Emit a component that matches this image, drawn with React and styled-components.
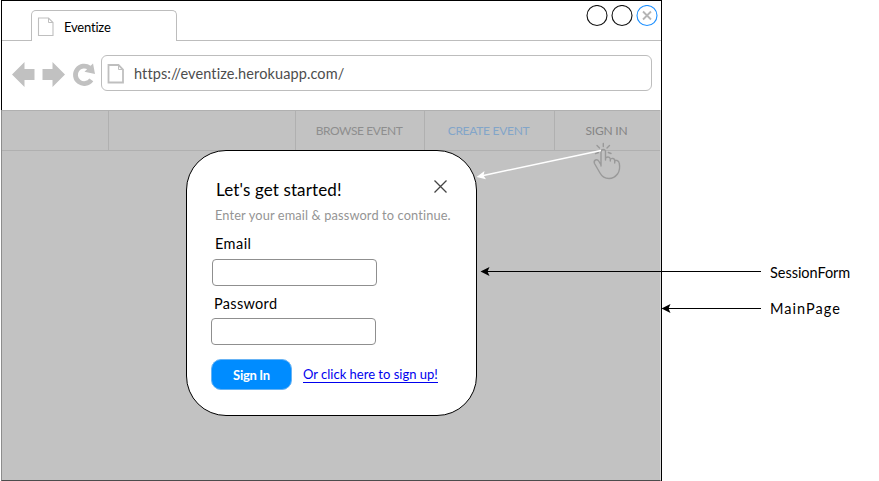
import React from "react";
import styled, { createGlobalStyle } from "styled-components";

const GlobalStyle = createGlobalStyle`
  * { box-sizing: border-box; }
  body { margin: 0; background: #fff; overflow: hidden; font-family: "Century Gothic", Lato, sans-serif; }
`;

const Stage = styled.div`
  position: relative;
  display: flex;
  width: 879px;
  height: 481px;
  padding-left: 1px;
  background: #fff;
`;

const Browser = styled.div`
  display: flex;
  flex-direction: column;
  flex: none;
  width: 661px;
  height: 481px;
  border-top: 1px solid #000;
  border-right: 1px solid #000;
`;

const Text = styled.span`
  font-size: ${(p) => p.$size}px;
  line-height: 20px;
  font-weight: ${(p) => p.$weight || 400};
  letter-spacing: ${(p) => p.$spacing || 0}px;
  color: ${(p) => p.$color || "#000"};
  font-variant-ligatures: none;
  white-space: nowrap;
`;

const Chrome = styled.div`
  flex: none;
  height: 109px;
  border-left: 1px solid #000;
`;

const TabStrip = styled.div`
  display: flex;
  height: 40px;
  align-items: flex-end;
`;

const StripEdge = styled.div`
  width: 29px;
  height: 1px;
  background: #bdbdbd;
`;

const StripRest = styled.div`
  display: flex;
  flex: 1;
  height: 40px;
  justify-content: flex-end;
  gap: 3px;
  padding: 4px 3.5px 0 0;
  border-bottom: 1px solid #bdbdbd;
`;

const Tab = styled.div`
  display: flex;
  width: 146px;
  height: 31px;
  padding: 6px 0 0 5px;
  gap: 10px;
  border: 1px solid #bdbdbd;
  border-bottom: 0;
  border-radius: 5px 5px 0 0;
`;

const Toolbar = styled.div`
  display: flex;
  padding: 14px 0 0 10px;
`;

const NavIcons = styled.svg`
  flex: none;
  width: 89px;
  height: 36px;
`;

const AddressBar = styled.div`
  display: flex;
  width: 551px;
  height: 36px;
  padding: 8px 0 0 5px;
  gap: 10px;
  border: 1px solid #bdbdbd;
  border-radius: 6px;
`;

const Page = styled.div`
  flex: 1;
  background: #c2c2c2;
  border-left: 1px solid #8c8c8c;
  border-right: 1px solid #dadada;
  border-bottom: 1px solid #4c4c4c;
`;

const NavBar = styled.nav`
  display: grid;
  grid-template-columns: 107px 187px 129px 130px 1fr;
  height: 41px;
  border-top: 1px solid #b0b0b0;
  border-bottom: 1px solid #b0b0b0;
`;

const NavCell = styled.div`
  display: flex;
  justify-content: center;
  padding: 10px 2px 0 0;
  border-right: ${(p) => (p.$last ? 0 : 1)}px solid #b0b0b0;
`;

const Modal = styled.section`
  position: absolute;
  left: 186px;
  top: 150px;
  width: 291px;
  height: 266px;
  padding: 0 0 0 24px;
  border: 1px solid #000;
  border-radius: 40px;
  background: #fff;
`;

const ModalHeader = styled.header`
  display: flex;
  justify-content: space-between;
  height: 54px;
  padding: 29px 29.5px 0 5px;
`;

const CloseIcon = styled.svg`
  flex: none;
  width: 13px;
  height: 13px;
  margin-top: -0.5px;
`;

const Line = styled.div`
  display: flex;
  height: ${(p) => p.$height}px;
  padding-top: ${(p) => p.$top || 0}px;
  padding-left: ${(p) => p.$indent}px;
`;

const Field = styled.input`
  display: block;
  width: 165px;
  height: 27px;
  margin: 0 0 0 ${(p) => p.$indent}px;
  border: 1px solid #8f8f8f;
  border-radius: 4px;
  background: #fff;
`;

const Actions = styled.div`
  display: flex;
  align-items: center;
  gap: 11px;
  margin-top: 14px;
`;

const SignInButton = styled.button`
  display: flex;
  align-items: center;
  justify-content: center;
  width: 81px;
  height: 31px;
  padding: 0;
  border: 1px solid #66b3f5;
  border-radius: 10px;
  background: #008cff;
  font-family: inherit;
`;

const SignUpLink = styled.a`
  display: flex;
  height: 16px;
  align-items: center;
  border-bottom: 1px solid #0000ee;
  text-decoration: none;
`;

const Notes = styled.aside`
  display: flex;
  flex-direction: column;
  gap: 16px;
  padding: 263px 0 0 108px;
`;

const Annotations = styled.svg`
  position: absolute;
  inset: 0;
  pointer-events: none;
`;

const PageIcon = ({ stroke = 1 }) => (
  <svg width="17" height="20" viewBox="0 0 17 20" fill="none" stroke="#bfbfbf" strokeWidth={stroke}>
    <path d="M1.5 1H11.5L16 5.5V18.5H1.5Z" />
    <path d="M11.5 1V5.5H16" strokeWidth="1" />
  </svg>
);

const WindowButton = ({ close }) => (
  <svg width="22" height="22" viewBox="0 0 22 22" fill="none">
    <circle cx="11" cy="10.5" r="10" stroke={close ? "#1e90ff" : "#111"} strokeWidth="1.1" />
    {close && <path d="M7 6.5L15 14.5M15 6.5L7 14.5" stroke="#b5b5b5" strokeWidth="1.8" />}
  </svg>
);

export default function App() {
  return (
    <Stage>
      <GlobalStyle />
      <Browser>
        <Chrome>
          <TabStrip>
            <StripEdge />
            <Tab>
              <PageIcon stroke={1.1} />
              <Text $size={13} $spacing={-0.2}>Eventize</Text>
            </Tab>
            <StripRest>
              <WindowButton />
              <WindowButton />
              <WindowButton close />
            </StripRest>
          </TabStrip>
          <Toolbar>
            <NavIcons viewBox="12 55 89 36" fill="#c1c1c1">
              <path d="M12 74.5L24.5 62V69H34.5V80H24.5V87Z" />
              <path d="M65 74.5L52.5 62V69H42.5V80H52.5V87Z" />
              <path d="M91.3 79.8A8.7 8.7 0 1 1 89.5 68" fill="none" stroke="#c1c1c1" strokeWidth="4.8" />
              <path d="M93 63.5L95 74L84.5 71.8Z" />
            </NavIcons>
            <AddressBar>
              <PageIcon stroke={1.8} />
              <Text $size={14.5} $spacing={0.11} $color="#4d4d4d">https://eventize.herokuapp.com/</Text>
            </AddressBar>
          </Toolbar>
        </Chrome>
        <Page>
          <NavBar>
            <NavCell />
            <NavCell />
            <NavCell><Text $size={12} $spacing={-0.43} $color="#8e8e8e">BROWSE EVENT</Text></NavCell>
            <NavCell><Text $size={12} $spacing={-0.28} $color="#82a5c9">CREATE EVENT</Text></NavCell>
            <NavCell $last><Text $size={12} $spacing={-0.23} $color="#858585">SIGN IN</Text></NavCell>
          </NavBar>
        </Page>
      </Browser>
      <Notes>
        <Text $size={14.5} $spacing={-0.04}>SessionForm</Text>
        <Text $size={14.5} $spacing={1.04}>MainPage</Text>
      </Notes>
      <Modal>
        <ModalHeader>
          <Text $size={17} $spacing={0.12}>Let's get started!</Text>
          <CloseIcon viewBox="0 0 13 13" stroke="#444" strokeWidth="1.3">
            <path d="M.5 .5L12.5 12.5M12.5 .5L.5 12.5" />
          </CloseIcon>
        </ModalHeader>
        <Line $height={29} $indent={4}>
          <Text $size={12.8} $spacing={0.13} $color="#949494">Enter your email &amp; password to continue.</Text>
        </Line>
        <Line $height={25} $indent={4}><Text $size={14.5} $spacing={0.45}>Email</Text></Line>
        <Field $indent={1} aria-label="Email" />
        <Line $height={32} $top={8} $indent={3}><Text $size={14.5} $spacing={0.31}>Password</Text></Line>
        <Field $indent={0} type="password" aria-label="Password" />
        <Actions>
          <SignInButton><Text $size={13} $weight={700} $spacing={-0.3} $color="#fff">Sign In</Text></SignInButton>
          <SignUpLink href="#"><Text $size={13} $color="#0000ee">Or click here to sign up!</Text></SignUpLink>
        </Actions>
      </Modal>
      <Annotations width="879" height="481" viewBox="0 0 879 481" fill="none">
        <path d="M482 271.5H761M664 308.5H761" stroke="#000" />
        <path d="M480.5 271.5L489.5 267L487.5 271.5L489.5 276ZM661.5 308.5L670.5 304L668.5 308.5L670.5 313Z" fill="#000" />
        <g stroke="#999" strokeWidth="1.4" strokeLinecap="round" strokeLinejoin="round">
          <path d="M601 166V152Q601 149.5 603.3 149.5T605.5 152V160V158.5Q606 157 608 157T610.3 159V161V159.5Q611 158 613 158.5T614.7 161V163V161.5Q615 160 617 160.5T619.3 163.5Q620.5 170 617.5 174Q614 178.5 609 178.5Q603 178.5 600 173L594.5 163.5Q593.5 161 595.5 160T599 161.5L601 165" />
          <path d="M603.3 143.5V146.5M597 145.5L599.5 148M609.5 145.5L607 148M595.5 153.5L598.5 152.5M608.3 152.5L611 153.5" />
        </g>
        <path d="M601 150.5L481 176" stroke="#fff" strokeWidth="1.4" />
        <path d="M476.5 177L484.5 171L483.5 175.5L486 179.3Z" fill="#fff" />
      </Annotations>
    </Stage>
  );
}
